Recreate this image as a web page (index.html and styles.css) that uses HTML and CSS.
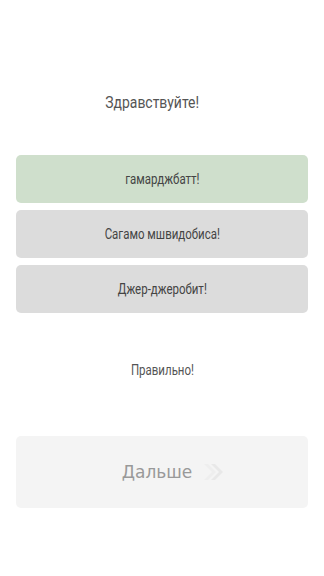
FILE: index.html
```html
<!DOCTYPE html>
<html lang="ru">
<head>
  <meta charset="UTF-8" />
  <meta name="viewport" content="width=device-width, initial-scale=1.0"/>
  <title>Урок</title>
  <link rel="stylesheet" href="styles.css">
</head>
<body>
  <div class="screen">
    <div class="question"><span class="narrow">Здравствуйте!</span></div>

    <div class="answers">
      <div class="answer correct"><span class="narrow">гамарджбатт!</span></div>
      <div class="answer"><span class="narrow">Сагамо мшвидобиса!</span></div>
      <div class="answer"><span class="narrow">Джер-джеробит!</span></div>
    </div>

    <div class="result"><span class="narrow">Правильно!</span></div>

    <button class="next">
      <span>Дальше</span>
      <svg class="chev" width="22" height="20" viewBox="0 0 22 20">
        <path d="M2 2 L10 10 L2 18 L6 18 L14 10 L6 2 Z" fill="#eeeeee"/>
        <path d="M9 2 L17 10 L9 18 L13 18 L21 10 L13 2 Z" fill="#e8e8e8"/>
      </svg>
    </button>
  </div>
</body>
</html>
```

FILE: styles.css
```css
* { margin: 0; padding: 0; box-sizing: border-box; }
body {
  background: #fff;
  font-family: 'Roboto', sans-serif;
  color: #555;
}
.screen {
  width: 324px;
  height: 576px;
  padding: 91px 16px 0;
}
.narrow {
  display: inline-block;
  transform: scaleX(0.82);
}
.question {
  text-align: center;
  font-size: 17px;
  line-height: 23px;
  color: #555;
  padding-right: 20px;
}
.answers {
  margin-top: 41px;
  display: flex;
  flex-direction: column;
  gap: 7px;
}
.answer {
  height: 48px;
  border-radius: 5px;
  background: #dcdcdc;
  display: flex;
  align-items: center;
  justify-content: center;
  font-size: 14px;
  color: #444;
}
.answer.correct { background: #cfdfcc; }
.result {
  margin-top: 48px;
  text-align: center;
  font-size: 14px;
  line-height: 18px;
  color: #555;
}
.next {
  margin-top: 57px;
  width: 100%;
  height: 72px;
  border: none;
  border-radius: 5px;
  background: #f4f4f4;
  display: flex;
  align-items: center;
  justify-content: center;
  gap: 10px;
  font-family: 'DejaVu Sans', sans-serif;
  font-size: 17px;
  color: #999;
  padding-left: 22px;
}
.chev { display: block; }
```
